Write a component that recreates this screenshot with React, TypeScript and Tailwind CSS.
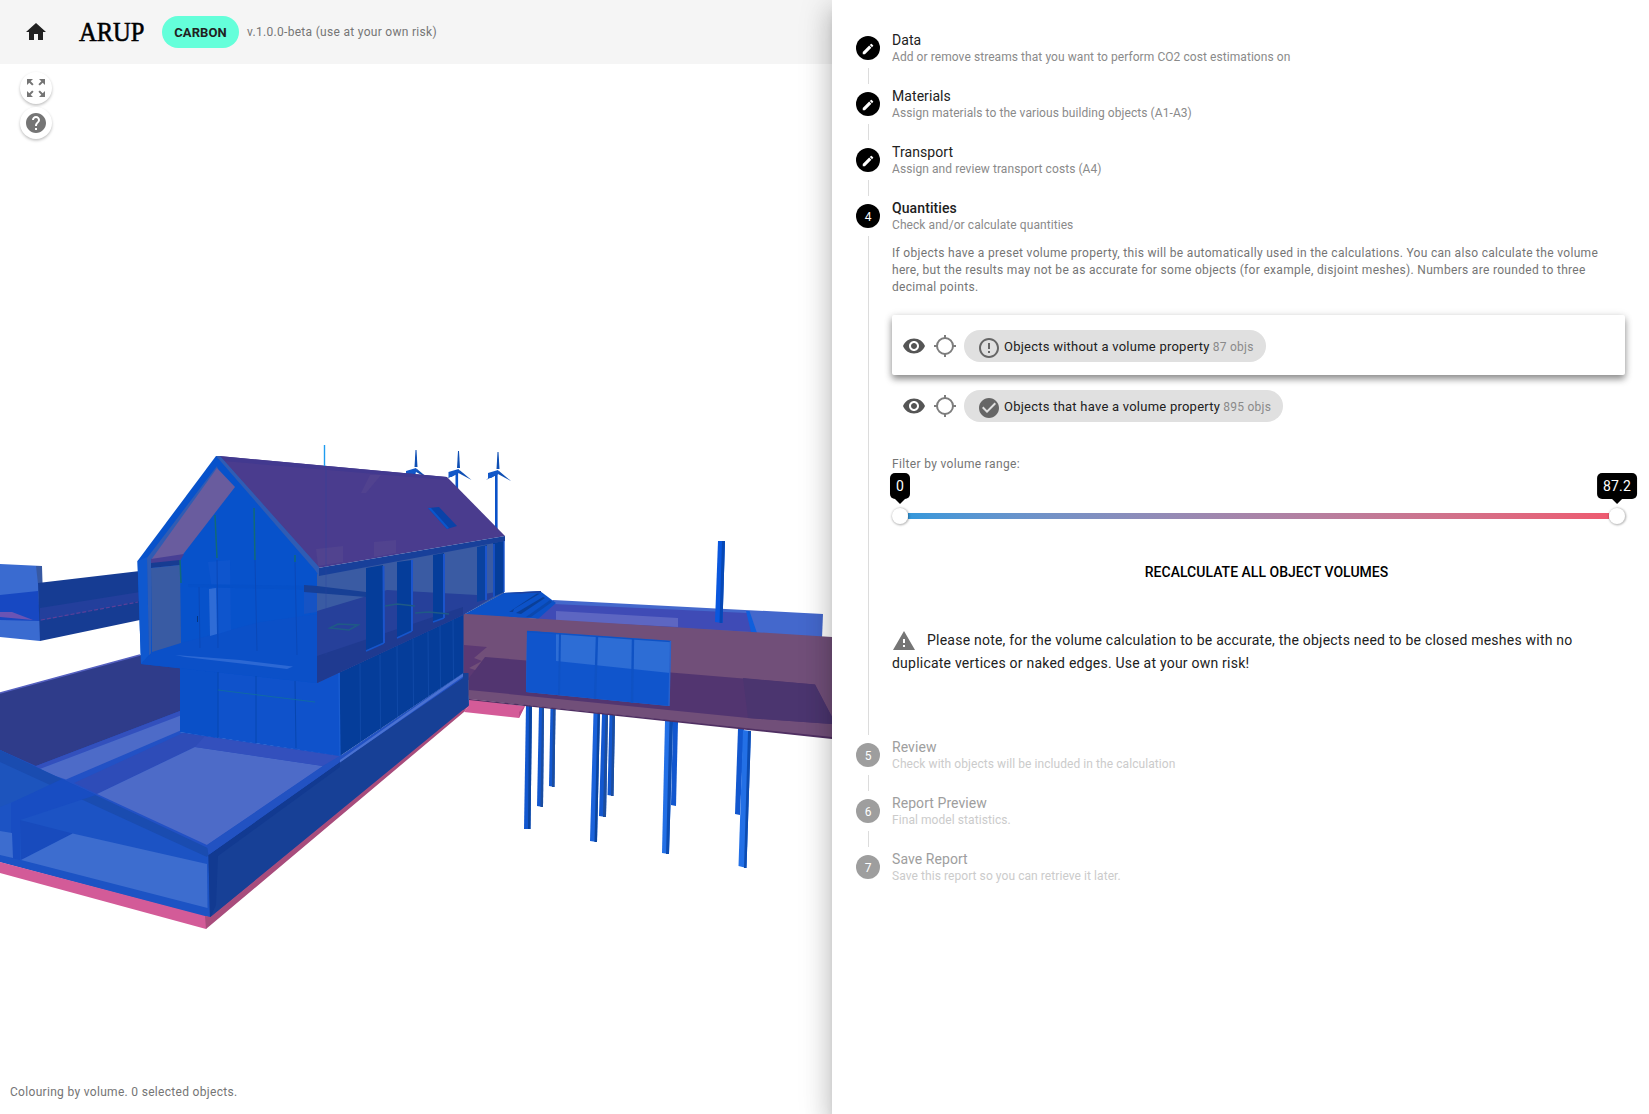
import React from "react";
import {
  MdHome,
  MdHelp,
  MdZoomOutMap,
  MdEdit,
  MdVisibility,
  MdErrorOutline,
  MdCheckCircle,
  MdWarning,
} from "react-icons/md";

type P = [pts: string, fill: string];

function Shapes({ items }: { items: P[] }) {
  return (
    <>
      {items.map(([pts, fill], i) => (
        <polygon key={i} points={pts} fill={fill} />
      ))}
    </>
  );
}

const leftWing: P[] = [
  ["0,564 42,566 42,584 40,641 0,637", "#3a6bd0"],
  ["36,566 42,566 42.5,583 38,584", "#3759a3"],
  ["0,595 38,591 40,621 0,620", "#1748c2"],
  ["38,583 140,571 140,620 40,641", "#163c93"],
  ["40,608 140,592 140,601 40,621", "#233f9c"],
  ["0,612 12,612 33,620 0,617", "#6a54b4"],
];

const garden: P[] = [
  ["0,693 140,655 185,668 185,715 36,767 0,756", "#2f3c8a"],
  ["0,750 36,766 180,711 180,732 345,756 468,672 468,706 210,918 0,862", "#2251c5"],
  ["36,766 180,711 180,716 37,770", "#3350bd"],
  ["37,770 180,715.7 180,730.7 66,779.5", "#4d6bc8"],
  ["74,783 183,733 335,757 323,766 195,747 97,794", "#2e4cb8"],
  ["97,794 195,747 323,766 207,845", "#4d6bc8"],
  ["205,736 183,733 340,756 323,766 195,747", "#3350bd"],
  ["0,750 212,852 210,918 0,862", "#1c53c4"],
  ["0,750 62,779 52,786 10,803 0,807", "#1d54bd"],
  ["0,750 212,850 207,857 0,762", "#1a4cb0"],
  ["11,803 62,779 96,795 20,820 20,860 11,858", "#184dc2"],
  ["20,820 72.7,833.5 21,860", "#184bbd"],
  ["72.7,833.5 207,864 207.5,908 21,860", "#3d6dcf"],
  ["0,831 12,833 13,858 0,855", "#3d6dcf"],
  ["208.5,855 340,762 463,678 468,673 469,706 210,918", "#174096"],
  ["208.5,855 340,762 340,767 218,856 216,905 210,918", "#123a91"],
  ["207,845 323,766 340,756 463,673 468,673 340,762 208.5,855", "#2252c2"],
  ["340,760 463,673 468,673 340,762.5", "#4a72d2"],
  ["0,862 205,916 210.5,917.5 206,929 0,873", "#d35b98"],
  ["205,916 210.5,917 469,705 464,712 206,929", "#a84c7c"],
  ["469,699 525,706 519,718 464,712 469,705", "#d45b98"],
  ["525,706 519,718 519,712", "#bb4c86"],
];

const bridgeBack: P[] = [
  ["553,600 823,614 822,638 535,620", "#4468cc"],
  ["553,604 747,613 752,632 535,620", "#3f4bb6"],
  ["556,611 678,618 678,627 556,621", "#5d66c2"],
  ["746,611 749.5,611 757,633 751,632", "#0f5fdc"],
  ["718,541 725,541 722.5,623 715,622", "#0a57de"],
  ["722,541 725,541 722.5,623 719.5,623", "#0748b5"],
  ["463,615 503,593 540,591 556,603 538,619", "#0c52c8"],
  ["509,612 513,612 514,609 540,593.5 537,593.5", "#0a3f98"],
  ["516,613 521,614 545,598 543,597", "#0a3f98"],
  ["526,617 531,617 552,602 550,600", "#0b48ae"],
  ["503,593 541,591 541,592.5 520,593.5", "#1e3f9a"],
];

const bridge: P[] = [
  ["463,613.8 832,637 832,738 469,699 463,675", "#714f79"],
  ["464,645 487,647 474,658 482,661 469,668 481,672 470,680 464,680", "#5c3973"],
  ["485,657 815,684.5 832,717 832,724 748,718 469,690 469,678", "#523570"],
  ["743,678 815,684.5 832,717 832,724 748,718", "#4b356f"],
  ["469,699 832,737 832,739 469,700", "#4f2f62"],
  ["527,631 671,641 669,706 526,692", "#2d6dd5"],
  ["527,631 556,633 556,661 670,673 669,706 526,692", "#1055cc"],
  ["463,673 468.5,673 468.5,706 463,710", "#174096"],
];

const piers: P[] = [
  ["526,705 532,706 530.5,829 524,829", "#1257cf"],
  ["529,705 532,706 530.5,829 528,829", "#0a449f"],
  ["539,707 544,707 543,807 537,806", "#1257cf"],
  ["542,707 544,707 543,807 540.5,807", "#1b4d9f"],
  ["550.5,708 555.5,708 554.5,787 549,786", "#1257cf"],
  ["553,708 555.5,708 554.5,787 552,787", "#1b4d9f"],
  ["593.5,713 600,713 597,842 590,841", "#1a62da"],
  ["597.5,713 600,713 597,842 594.5,842", "#0a449f"],
  ["602,714 608,714 606,817 599,816", "#1257cf"],
  ["605.5,714 608,714 606,817 603,817", "#1b4d9f"],
  ["609.5,715 615,715 613.5,796 607.5,795", "#1257cf"],
  ["612.5,715 615,715 613.5,796 611,796", "#1b4d9f"],
  ["673,722 678,722 676,806 671,805", "#1257cf"],
  ["665,721 673,721 669,854 662,853", "#2370e6"],
  ["669.5,721 673,721 669,854 666,854", "#0c4cb2"],
  ["738,729 744,729 740,815 735,814", "#1257cf"],
  ["743,730 751,731 746.5,868 738.5,866", "#2370e6"],
  ["748,731 751,731 746.5,868 744,868", "#0c4cb2"],
];

const house: P[] = [
  ["180,667 340,672 340,756 180,732", "#0f52cb"],
  ["180,667 218,672 218,738 180,732", "#0a50c8"],
  ["340,672 463.5,614 463.5,673 340,756", "#053d9a"],
  ["216,456 219,456 319,567 317,683 141,664 137.5,561", "#0752cb"],
  ["137.5,561 147,557 149,655 141,664", "#0f58cf"],
  ["147,558 217,466 218,470 151,561 151,655 149,655", "#2f5cb4"],
  ["217,468 235,487 181,557 151,560", "#695c9e"],
  ["151,559 184,554 180,561 151,564", "#483f95"],
  ["151,563 180,560 180,565 151,568", "#173c92"],
  ["151,568 180,565 181,644 152,654", "#395ba3"],
  ["152,652 181,643 260,622 317,614 317,683 141,664", "#0b50c8"],
  ["175,655 240,660 293,666.5 287,669 185,657", "#2c68d4"],
  ["208,562 230,560 231,630 218,634", "#0e55cd"],
  ["209,589 216,588 217,634 210,636", "#2f6cd6"],
  ["188,584 317,586 317,590 188,587", "#0650c8"],
  ["304,587 317,588 317,612 304,614", "#1653c4"],
  ["317,574 504,540 504,593 463,615 317,683", "#3a5ba3"],
  ["317,611 387,590 477,595 503,591 463,615 317,683", "#26409a"],
  ["317,656 463,607 463,615 317,683", "#1f3a90"],
  ["304,585 317,586 366,592 366,597 304,592", "#173f95"],
  ["366,568 383,565 384,643 366,650", "#053d9a"],
  ["397,562 412,560 412,631 397,637", "#053d9a"],
  ["433,555 444,553 444,618 433,622", "#053d9a"],
  ["477,547 487,545 487,599 477,602", "#0a429f"],
  ["493,543 504,541 504,592 493,597", "#053d9a"],
  ["219,456 447,477 505,536 318,568", "#4a3c8e"],
  ["223,461 447,480 447,477 219,456", "#42398f"],
  ["318,568 505,536 505,541 319,576", "#18409a"],
  ["216,456 220,456 319,567 319,576 315,570", "#2f5cb4"],
  ["428,508 439,507 457,526 447,529", "#0a42a8"],
  ["428,508 431,508 449,528 447,529", "#0b55cc"],
  ["316,549 343,546 343,562 318,566", "#51438f"],
  ["374,542 396,540 396,553 374,557", "#51438f"],
  ["370,475 381,475 366,493 361,493", "#51428f"],
];

type LineDef = [x1: number, y1: number, x2: number, y2: number, stroke: string, w: number];

const houseLines: LineDef[] = [
  [215, 515, 217, 558, "#126a76", 1.5],
  [254, 508, 255, 560, "#126a76", 1.5],
  [180, 560, 181, 583, "#126a76", 1.5],
  [295, 555, 295, 562, "#126a76", 1.5],
  [217, 560, 218, 648, "#0a48b8", 1],
  [255, 560, 257, 651, "#0a48b8", 1],
  [295, 562, 297, 655, "#0a48b8", 1],
  [199, 587, 200, 648, "#0a48b8", 1],
  [197.5, 616, 197.5, 622, "#053580", 1],
  [218, 672, 218, 738, "#0746b0", 1],
  [256, 676, 256, 743, "#0746b0", 1],
  [295, 681, 296, 748, "#0746b0", 1],
  [218, 690, 315, 702, "#12709c", 0.8],
  [339, 673, 340, 756, "#1b5ed2", 1.2],
  [360, 664, 360.5, 742, "#1049a8", 1],
  [380, 655, 380.5, 729, "#1049a8", 1],
  [397, 646, 397.5, 717, "#1049a8", 1],
  [413, 639, 413.5, 706, "#1049a8", 1],
  [428, 632, 428.5, 696, "#1049a8", 1],
  [440, 626, 440.5, 688, "#1049a8", 1],
  [453, 620, 453.5, 679, "#1049a8", 1],
  [383.5, 566, 384, 643, "#1b54cc", 2],
  [366, 651, 384, 643, "#1556cc", 1.6],
  [412, 560, 412, 631, "#1b54cc", 2],
  [397, 638, 412, 631, "#1556cc", 1.6],
  [444, 554, 444, 618, "#1b54cc", 2],
  [433, 622, 444, 618, "#1556cc", 1.6],
  [486, 546, 486, 600, "#1b54cc", 2],
  [494, 544, 494, 597, "#1b54cc", 1.6],
  [504, 541, 504, 592, "#1b54cc", 1.4],
  [326, 466, 326, 655, "#2a45a0", 0.4],
  [0, 693, 140, 655, "#5560c0", 1.6],
  [324.5, 445, 324.5, 466, "#1e9cf0", 1.4],
];

const windowLines: LineDef[] = [
  [560, 633.5, 559, 695, "#0f52c4", 2],
  [597, 636, 595, 699, "#0f52c4", 2.4],
  [633, 639, 632, 703, "#0f52c4", 2.4],
  [527, 631.5, 671, 641.5, "#0f52c4", 1.6],
  [670.5, 641, 669, 706, "#2a62cc", 1.4],
];

function Lines({ items }: { items: LineDef[] }) {
  return (
    <>
      {items.map(([x1, y1, x2, y2, s, w], i) => (
        <line key={i} x1={x1} y1={y1} x2={x2} y2={y2} stroke={s} strokeWidth={w} />
      ))}
    </>
  );
}

function Turbine({ x, y, pole }: { x: number; y: number; pole: number }) {
  return (
    <g fill="#0f4fb4">
      <rect x={x - 3} y={y} width="2.6" height={pole} fill="#0b52c8" />
      <polygon points={`${x - 1.5},${y - 3} ${x - 0.5},${y - 20} ${x + 0.5},${y - 20} ${x + 1.5},${y - 3}`} />
      <polygon points={`${x + 1},${y - 1} ${x + 13},${y + 9} ${x},${y + 2}`} />
      <polygon points={`${x - 1},${y - 1} ${x - 12},${y + 8} ${x},${y + 2}`} />
      <polygon points={`${x - 10},${y + 1} ${x},${y - 2} ${x + 2},${y + 1} ${x - 7},${y + 6} ${x - 10},${y + 6}`} fill="#1257c8" />
    </g>
  );
}

function Model() {
  return (
    <svg className="block h-[1050px] w-[832px]" viewBox="0 64 832 1050">
      <Shapes items={leftWing} />
      <line x1="41" y1="620" x2="138" y2="602" stroke="#5a4099" strokeWidth="1.2" strokeDasharray="4 2" />
      <Shapes items={garden} />
      <Turbine x={416} y={470} pole={6} />
      <Turbine x={458.5} y={471} pole={18} />
      <Turbine x={498} y={472} pole={58} />
      <Shapes items={bridgeBack} />
      <Shapes items={piers} />
      <Shapes items={bridge} />
      <Lines items={windowLines} />
      <Shapes items={house} />
      <Lines items={houseLines} />
      <g fill="none" stroke="#1f5a86" strokeWidth="1.6">
        <path d="M330 628l8-4 20 1-9 5z M385 606l12-2 18 2 M415 613l14-1 20 2" />
      </g>
    </svg>
  );
}

function Step({
  n,
  title,
  sub,
  state,
  last,
  children,
}: {
  n: number;
  title: string;
  sub: string;
  state: "done" | "active" | "off";
  last?: boolean;
  children?: React.ReactNode;
}) {
  const off = state === "off";
  return (
    <div className="flex">
      <div className="flex w-9 shrink-0 flex-col items-start">
        <div
          className={`flex size-6 shrink-0 items-center justify-center rounded-full text-xs text-white ${off ? "bg-[#9e9e9e]" : "bg-black"}`}
        >
          {state === "done" ? <MdEdit size={14} className="mt-0.5" /> : <span className="mt-px">{n}</span>}
        </div>
        {!last && <div className="my-2 ml-3 min-h-4 w-px grow bg-[#dcdcdc]" />}
      </div>
      <div className="min-w-0 grow">
        <div className="-mt-1 h-9">
          <div
            className={`whitespace-nowrap text-sm leading-4 ${off ? "text-[#9e9e9e]" : "text-[#212121]"} ${state === "active" ? "font-medium tracking-[0.09px]" : "tracking-[0.07px]"}`}
          >
            {title}
          </div>
          <div
            className={`mt-0.5 whitespace-nowrap text-xs leading-[14px] tracking-[0.07px] ${off ? "text-[#cbcbcb]" : "text-[#8a8a8a]"}`}
          >
            {sub}
          </div>
        </div>
        {children}
      </div>
    </div>
  );
}

function Target() {
  return (
    <svg viewBox="0 0 24 24" className="size-6" fill="none" stroke="#7d7d7d" strokeWidth="2">
      <circle cx="12" cy="12" r="8" />
      <path d="M12 1v3.5M12 19.5V23M1 12h3.5M19.5 12H23" />
    </svg>
  );
}

function ObjectRow({ icon, label, count, raised }: { icon: React.ReactNode; label: string; count: string; raised?: boolean }) {
  return (
    <div
      className={`flex h-[60px] items-center rounded-[2px] pt-0.5 pl-2.5 ${raised ? "bg-white shadow-[0_4px_7px_rgba(0,0,0,0.42),0_1px_10px_rgba(0,0,0,0.1)]" : ""}`}
    >
      <MdVisibility size={24} className="text-[#555]" />
      <div className="ml-[7px]">
        <Target />
      </div>
      <div className="ml-[7px] flex h-8 items-center whitespace-nowrap rounded-full bg-[#e0e0e0] pr-3 pl-[12.5px]">
        <div className="mt-1 mr-[3.5px] text-[#666]">{icon}</div>
        <span className="pt-px text-[13px] tracking-[0.24px] text-[#212121]">{label}</span>
        <span className="ml-[3px] pt-px text-xs tracking-[0.28px] text-[#8a8a8a]">{count}</span>
      </div>
    </div>
  );
}

function Thumb({ value }: { value: string }) {
  return (
    <div className="relative size-4 rounded-full bg-white shadow-[0.5px_0.5px_2px_1px_rgba(0,0,0,0.25)]">
      <div className="absolute bottom-[25px] left-1/2 flex h-[26px] -translate-x-1/2 items-center rounded-[5px] bg-black px-[6px] text-sm tracking-[0.14px] text-white">
        {value}
        <span className="absolute -bottom-[5px] left-1/2 -translate-x-1/2 border-x-5 border-t-5 border-x-transparent border-t-black" />
      </div>
    </div>
  );
}

export default function App() {
  return (
    <div className="flex h-[1114px] w-[1649px] overflow-hidden bg-white font-['Roboto',sans-serif] text-[#212121]">
      <div className="flex w-[832px] shrink-0 flex-col">
        <header className="flex h-16 shrink-0 items-center bg-[#f5f5f5] pl-6">
          <MdHome size={24} className="text-[#212121]" />
          <svg className="ml-[26px] h-12 w-20" viewBox="0 0 80 48">
            <text
              x="5"
              y="33"
              fontFamily="Liberation Serif"
              fontSize="27.5"
              textLength="65.5"
              lengthAdjust="spacingAndGlyphs"
              fill="#000"
              stroke="#000"
              strokeWidth="0.6"
            >
              ARUP
            </text>
          </svg>
          <div className="ml-2 flex h-8 w-[77px] items-center justify-center rounded-full bg-[#64ffda] text-[13px] font-bold tracking-[0.08px]">
            <span className="pt-px">CARBON</span>
          </div>
          <span className="ml-2 text-xs tracking-[0.3px] whitespace-nowrap text-[#757575]">v.1.0.0-beta (use at your own risk)</span>
        </header>
        <main className="relative h-[1050px]">
          <Model />
          <div className="absolute top-2 left-5 flex flex-col gap-[3px] text-[#757575]">
            <button className="flex size-8 items-center justify-center rounded-full bg-white shadow-[0_1.5px_3px_rgba(0,0,0,0.26)]">
              <MdZoomOutMap size={24} />
            </button>
            <button className="flex size-8 items-center justify-center rounded-full bg-white shadow-[0_1.5px_3px_rgba(0,0,0,0.26)]">
              <MdHelp size={24} />
            </button>
          </div>
          <p className="absolute bottom-[13px] left-[10px] text-xs leading-[17px] tracking-[0.31px] text-[#757575]">
            Colouring by volume. 0 selected objects.
          </p>
        </main>
      </div>

      <aside className="relative z-10 flex w-[817px] shrink-0 flex-col bg-white pt-9 pr-6 pl-6 shadow-[0_8px_10px_-5px_rgba(0,0,0,0.2),0_16px_24px_2px_rgba(0,0,0,0.14),0_6px_30px_5px_rgba(0,0,0,0.12)]">
        <Step n={1} state="done" title="Data" sub="Add or remove streams that you want to perform CO2 cost estimations on" />
        <Step n={2} state="done" title="Materials" sub="Assign materials to the various building objects (A1-A3)" />
        <Step n={3} state="done" title="Transport" sub="Assign and review transport costs (A4)" />
        <Step n={4} state="active" title="Quantities" sub="Check and/or calculate quantities">
          <div className="flex h-[507px] w-[733px] flex-col pt-[9px]">
            <p className="text-xs leading-[17px] tracking-[0.315px] text-[#757575]">
              If objects have a preset volume property, this will be automatically used in the calculations. You can also
              calculate the volume here, but the results may not be as accurate for some objects (for example, disjoint
              meshes). Numbers are rounded to three decimal points.
            </p>
            <div className="mt-[19px]">
              <ObjectRow raised icon={<MdErrorOutline size={24} />} label="Objects without a volume property" count="87 objs" />
              <ObjectRow icon={<MdCheckCircle size={24} />} label="Objects that have a volume property" count="895 objs" />
            </div>
            <p className="mt-[21px] text-xs leading-[17px] tracking-[0.34px] text-[#757575]">Filter by volume range:</p>
            <div className="mt-[35px] flex h-4 items-center">
              <Thumb value="0" />
              <div className="h-1.5 grow bg-linear-to-r from-[#3498db] to-[#ee5a70]" />
              <Thumb value="87.2" />
            </div>
            <div className="mt-10 flex h-4 items-center justify-center pl-4">
              <span className="text-sm font-medium tracking-[0.02px] text-black">RECALCULATE ALL OBJECT VOLUMES</span>
            </div>
            <p className="mt-[47px] text-sm leading-[23px] tracking-[0.225px] whitespace-nowrap">
              <MdWarning size={24} className="relative top-[1.5px] mr-[11px] inline-block align-[-6px] text-[#757575]" />
              Please note, for the volume calculation to be accurate, the objects need to be closed meshes with no
              <br />
              duplicate vertices or naked edges. Use at your own risk!
            </p>
          </div>
        </Step>
        <Step n={5} state="off" title="Review" sub="Check with objects will be included in the calculation" />
        <Step n={6} state="off" title="Report Preview" sub="Final model statistics." />
        <Step n={7} state="off" last title="Save Report" sub="Save this report so you can retrieve it later." />
      </aside>
    </div>
  );
}
